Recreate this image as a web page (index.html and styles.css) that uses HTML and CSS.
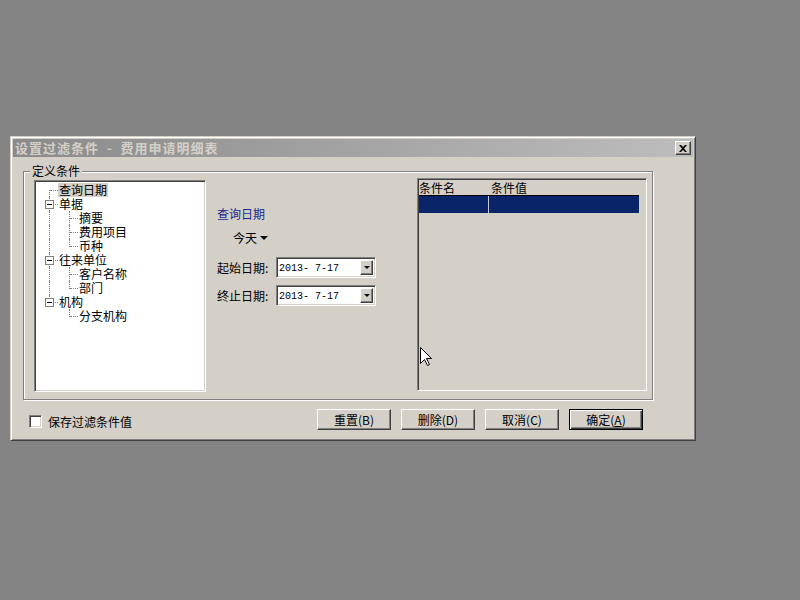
FILE: index.html
```html
<!DOCTYPE html>
<html lang="zh-CN">
<head>
  <meta charset="UTF-8">
  <title>设置过滤条件 - 费用申请明细表</title>
  <link rel="stylesheet" href="styles.css">
</head>
<body>

  <div class="window">
    <div class="titlebar">
      <span class="title">设置过滤条件  -  费用申请明细表</span>
      <span class="close-btn">
        <svg width="8" height="7" viewBox="0 0 8 7"><path d="M0 0h2l2 2 2-2h2l-3 3.5 3 3.5h-2l-2-2-2 2h-2l3-3.5z" fill="#000"/></svg>
      </span>
    </div>

    <div class="group">
      <div class="group-label">定义条件</div>
      <div class="group-body">

        <!-- tree -->
        <div class="tree">
          <div class="row"><span class="g f"></span><span class="txt sel">查询日期</span></div>
          <div class="row"><span class="g v t"><span class="box"></span></span><span class="txt">单据</span></div>
          <div class="row"><span class="g v"></span><span class="g v t"></span><span class="txt">摘要</span></div>
          <div class="row"><span class="g v"></span><span class="g v t"></span><span class="txt">费用项目</span></div>
          <div class="row"><span class="g v"></span><span class="g c"></span><span class="txt">币种</span></div>
          <div class="row"><span class="g v t"><span class="box"></span></span><span class="txt">往来单位</span></div>
          <div class="row"><span class="g v"></span><span class="g v t"></span><span class="txt">客户名称</span></div>
          <div class="row"><span class="g v"></span><span class="g c"></span><span class="txt">部门</span></div>
          <div class="row"><span class="g c"><span class="box"></span></span><span class="txt">机构</span></div>
          <div class="row"><span class="g"></span><span class="g c"></span><span class="txt">分支机构</span></div>
        </div>

        <!-- date options -->
        <div class="middle">
          <div class="cap">查询日期</div>
          <div class="today">今天<span class="caret"></span></div>
          <div class="field">
            <span class="field-label">起始日期:</span>
            <div class="combo"><span class="combo-text">2013- 7-17</span><span class="combo-btn"><span class="caret"></span></span></div>
          </div>
          <div class="field second">
            <span class="field-label">终止日期:</span>
            <div class="combo"><span class="combo-text">2013- 7-17</span><span class="combo-btn"><span class="caret"></span></span></div>
          </div>
        </div>

        <!-- condition list -->
        <div class="list">
          <div class="list-head">
            <span class="col1">条件名</span>
            <span class="col2">条件值</span>
          </div>
          <div class="list-row selected">
            <span class="col1"></span>
            <span class="col2"></span>
          </div>
        </div>

      </div>
    </div>

    <div class="footer">
      <div class="save">
        <span class="checkbox"></span>
        <span class="save-label">保存过滤条件值</span>
      </div>
      <div class="buttons">
        <span class="btn">重置(B)</span>
        <span class="btn">删除(D)</span>
        <span class="btn">取消(C)</span>
        <span class="btn default">确定(<u>A</u>)</span>
      </div>
    </div>
  </div>

  <!-- mouse pointer -->
  <svg class="pointer" width="13" height="20" viewBox="0 0 13 20">
    <path d="M0.5 0.5V16.5L4.5 12.5L7.5 18.5L9.5 17.5L6.5 11.5H11.5Z" fill="#fff" stroke="#000" stroke-width="1"/>
  </svg>

</body>
</html>
```

FILE: styles.css
```css
* {
  box-sizing: border-box;
}
body {
  margin: 0;
  height: 600px;
  overflow: hidden;
  background-color: #848484;
  font-family: "Noto Sans CJK SC", "Liberation Sans", sans-serif;
  font-size: 12px;
  color: #000;
}

/* window frame */
.window {
  display: flex;
  flex-direction: column;
  width: 686px;
  height: 305px;
  margin: 136px 0 0 10px;
  padding: 2px;
  background: #d4d0c8;
  border: 1px solid;
  border-color: #d4d0c8 #404040 #404040 #d4d0c8;
  box-shadow: inset 1px 1px 0 #fff, inset -1px -1px 0 #808080;
}
.titlebar {
  display: flex;
  align-items: center;
  height: 18px;
  padding-left: 2px;
  background: linear-gradient(to right, #8a8a8a, #bdbdbd);
  color: #d4d0c8;
  font-weight: bold;
  line-height: 14px;
}
.title {
  font-size: 13px;
  letter-spacing: 1px;
  white-space: pre;
}
.close-btn {
  display: flex;
  align-items: center;
  justify-content: center;
  width: 16px;
  height: 14px;
  margin-left: auto;
  margin-right: 2px;
  background: #d4d0c8;
  border: 1px solid;
  border-color: #fff #404040 #404040 #fff;
  box-shadow: inset -1px -1px 0 #808080;
}

/* group box */
.group {
  display: flex;
  flex-direction: column;
  width: 630px;
  margin: 14px 0 0 10px;
  border: 1px solid #808080;
  box-shadow: inset 1px 1px 0 #fff, 1px 1px 0 #fff;
}
.group-label {
  align-self: flex-start;
  height: 14px;
  margin: -8px 0 0 6px;
  padding: 0 2px;
  line-height: 14px;
  background: #d4d0c8;
}
.group-body {
  display: flex;
  align-items: flex-start;
  padding: 0 5px 7px 10px;
}

/* tree view */
.tree {
  width: 172px;
  height: 212px;
  margin-top: 2px;
  padding: 2px 0 0 4px;
  background: #fff;
  border: 1px solid;
  border-color: #808080 #fff #fff #808080;
  box-shadow: inset 1px 1px 0 #404040, inset -1px -1px 0 #d4d0c8;
}
.row {
  display: flex;
  height: 14px;
  line-height: 14px;
}
.g {
  position: relative;
  flex: none;
  width: 20px;
  height: 14px;
}
.g::before,
.g::after {
  position: absolute;
}
.g.v::before {
  content: "";
  left: 10px;
  top: 0;
  bottom: 0;
  border-left: 1px dotted #808080;
}
.g.f::before {
  content: "";
  left: 10px;
  top: 7px;
  bottom: 0;
  border-left: 1px dotted #808080;
}
.g.c::before {
  content: "";
  left: 10px;
  top: 0;
  height: 8px;
  border-left: 1px dotted #808080;
}
.g.t::after,
.g.c::after,
.g.f::after {
  content: "";
  left: 11px;
  top: 7px;
  width: 8px;
  border-top: 1px dotted #808080;
}
.box {
  position: absolute;
  z-index: 1;
  left: 6px;
  top: 3px;
  width: 9px;
  height: 9px;
  background: #fff;
  border: 1px solid #808080;
}
.box::before {
  content: "";
  position: absolute;
  left: 1px;
  top: 3px;
  width: 5px;
  height: 1px;
  background: #000;
}
.txt {
  margin-left: -1px;
  padding: 0 1px;
  white-space: nowrap;
}
.txt.sel {
  background: #d4d0c8;
}

/* middle column */
.middle {
  display: flex;
  flex-direction: column;
  width: 211px;
  padding: 29px 0 0 11px;
  line-height: 14px;
}
.cap {
  color: #16288c;
}
.today {
  display: flex;
  align-items: center;
  gap: 3px;
  margin: 10px 0 0 16px;
}
.caret {
  width: 0;
  height: 0;
  border: 4px solid transparent;
  border-top: 4px solid #000;
  border-bottom: 0;
}
.field {
  display: flex;
  align-items: center;
  margin-top: 12px;
}
.field.second {
  margin-top: 7px;
}
.field-label {
  width: 59px;
  white-space: nowrap;
}
.combo {
  display: flex;
  width: 100px;
  height: 21px;
  padding: 2px;
  background: #fff;
  border: 1px solid;
  border-color: #808080 #fff #fff #808080;
  box-shadow: inset 1px 1px 0 #404040, inset -1px -1px 0 #d4d0c8;
}
.combo-text {
  flex: 1;
  font-family: "Liberation Mono", monospace;
  font-size: 10px;
  line-height: 17px;
}
.combo-btn {
  display: flex;
  align-items: center;
  justify-content: center;
  width: 13px;
  background: #d4d0c8;
  border: 1px solid;
  border-color: #fff #404040 #404040 #fff;
  box-shadow: inset -1px -1px 0 #808080;
}
.combo-btn .caret {
  border-width: 3px;
  border-top-width: 3px;
}

/* list view */
.list {
  width: 230px;
  height: 213px;
  padding: 1px;
  background: #d4d0c8;
  border: 1px solid;
  border-color: #808080 #fff #fff #808080;
  box-shadow: inset 1px 1px 0 #404040, inset -1px -1px 0 #d4d0c8;
}
.list-head,
.list-row {
  display: flex;
  width: 220px;
}
.list-head {
  height: 16px;
  line-height: 15px;
  border-bottom: 1px solid #000;
}
.list-row {
  height: 17px;
}
.col1 {
  width: 70px;
}
.col2 {
  flex: 1;
  padding-left: 2px;
}
.list-row.selected {
  background: #0a246a;
}
.list-row.selected .col1 {
  border-right: 1px solid #c8c8d8;
}

/* footer */
.footer {
  display: flex;
  align-items: center;
  height: 21px;
  margin-top: 9px;
  padding-left: 16px;
}
.save {
  display: flex;
  align-items: center;
  margin-top: 4px;
}
.checkbox {
  width: 13px;
  height: 13px;
  background: #fff;
  border: 1px solid;
  border-color: #808080 #fff #fff #808080;
  box-shadow: inset 1px 1px 0 #404040, inset -1px -1px 0 #d4d0c8;
}
.save-label {
  margin-left: 6px;
  line-height: 14px;
}
.buttons {
  display: flex;
  gap: 10px;
  margin-left: auto;
  margin-right: 50px;
}
.btn {
  display: flex;
  align-items: center;
  justify-content: center;
  width: 74px;
  height: 21px;
  line-height: 14px;
  background: #d4d0c8;
  border: 1px solid;
  border-color: #fff #404040 #404040 #fff;
  box-shadow: inset -1px -1px 0 #808080;
}
.btn.default {
  border-color: #000;
  box-shadow: inset 1px 1px 0 #fff, inset -1px -1px 0 #404040, inset -2px -2px 0 #808080;
}

.pointer {
  position: absolute;
  left: 420px;
  top: 347px;
}
```
